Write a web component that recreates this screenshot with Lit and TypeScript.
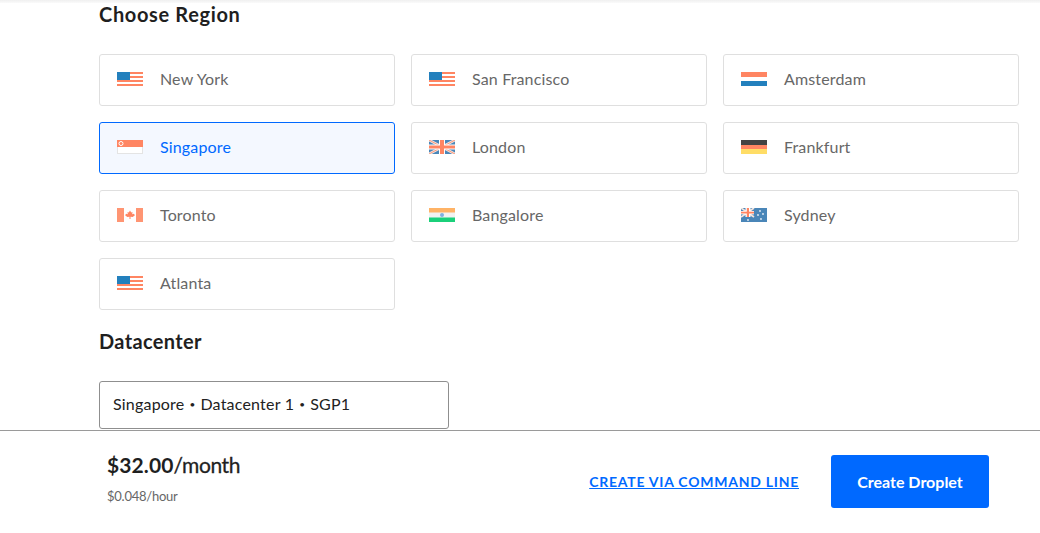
import { LitElement, html, css, svg } from "lit";
import { customElement } from "lit/decorators.js";

const R = (x: number, y: number, w: number, h: number, c: string) =>
  svg`<rect x=${x} y=${y} width=${w} height=${h} fill=${c}></rect>`;
const O = "#ff8562";
const B = "#2380bd";
const W = "#fff";

const us = svg`${R(0,0,26,14,W)}${R(0,0,26,2,O)}${R(0,4,26,2,O)}${R(0,8,26,2,O)}${R(0,12,26,2,O)}${R(0,0,13,8,B)}`;
const jack = svg`${R(0,0,26,14,"#4a86b8")}
  <path d="M0 0L26 14M26 0L0 14" stroke="#f3e4de" stroke-width="2.6"></path>
  <path d="M0 0L26 14M26 0L0 14" stroke=${O} stroke-width="0.8"></path>
  ${R(10,0,6,14,W)}${R(0,4.5,26,5,W)}${R(11,0,4,14,O)}${R(0,5.5,26,3,O)}`;
const flags: Record<string, unknown> = {
  us,
  nl: svg`${R(0,0,26,5,O)}${R(0,5,26,4,W)}${R(0,9,26,5,B)}`,
  sg: svg`${R(0,0,26,14,"#e4e4e4")}${R(1,7,24,6,W)}${R(0,0,26,7,O)}<circle cx="4" cy="3.5" r="2" fill="none" stroke="#fff" stroke-width="1"></circle>`,
  uk: jack,
  de: svg`${R(0,0,26,5,"#434343")}${R(0,5,26,4,O)}${R(0,9,26,5,"#ffdd66")}`,
  ca: svg`${R(0,0,26,14,W)}${R(0,0,7,14,"#ff9573")}${R(19,0,7,14,"#ff9573")}<path d="M13 2.5l1.2 2 1.3-.6-.3 2.400 1.700-.6 1 1.600-2.200 1.800-2.200-.3V11h-1V8.800l-2.200.3-2.200-1.800 1-1.600 1.700.6-.3-2.400 1.300.6z" fill=${O}></path>`,
  in: svg`${R(0,0,26,14,"#f2f2f2")}${R(0,0,26,4.5,"#ffb366")}${R(0,9.5,26,4.5,"#1bd07a")}<circle cx="13" cy="7" r="2" fill="#7fb0e0"></circle>`,
  au: svg`${R(0,0,26,14,"#4a86b8")}
    <path d="M0 0L13 9M13 0L0 9" stroke="#f3e4de" stroke-width="1.8"></path>
    ${R(4.5,0,5,9,W)}${R(0,3,13,3.4,W)}${R(5.8,0,2.2,9,O)}${R(0,3.7,13,1.8,O)}
    ${[[7,12],[19,3],[22,6],[17,7],[20,11]].map(([x,y]) => svg`<circle cx=${x} cy=${y} r="0.9" fill="#e8eef5"></circle>`)}`,
};

const regions = [
  ["New York", "us"], ["San Francisco", "us"], ["Amsterdam", "nl"],
  ["Singapore", "sg"], ["London", "uk"], ["Frankfurt", "de"],
  ["Toronto", "ca"], ["Bangalore", "in"], ["Sydney", "au"],
  ["Atlanta", "us"],
];

@customElement("app-root")
export class AppRoot extends LitElement {
  static styles = css`
    :host {
      display: flex;
      flex-direction: column;
      height: 533px;
      overflow: hidden;
      background: #fff;
      font-family: "Lato", "Liberation Sans", sans-serif;
      color: #1f1f1f;
    }
    .top { height: 3px; flex: none; background: linear-gradient(#f0f0f0, #fafafa); }
    main { height: 427px; flex: none; overflow: hidden; padding: 0 21px 0 99px; }
    h2 { margin: 0; font-size: 20px; line-height: 24px; font-weight: 700; letter-spacing: 0.35px; }
    .title { margin-top: -1px; letter-spacing: 0.65px; }
    .grid {
      display: grid;
      grid-template-columns: repeat(3, 296px);
      grid-auto-rows: 52px;
      gap: 16px;
      margin-top: 28px;
    }
    .card {
      box-sizing: border-box;
      display: flex;
      align-items: center;
      gap: 17px;
      padding: 0 0 2px 17px;
      border: 1px solid #dfdfdf;
      border-radius: 3px;
      font-size: 16px;
      letter-spacing: 0.15px;
      color: #676767;
    }
    .card span { margin-bottom: 2px; }
    .card.on { background: #f4f8ff; border-color: #0069ff; color: #0069ff; }
    .card svg { width: 26px; height: 14px; flex: none; }
    .dc { margin-top: 19px; }
    .select {
      box-sizing: border-box;
      width: 350px;
      height: 48px;
      margin-top: 28px;
      padding: 0 0 3px 13px;
      display: flex;
      align-items: center;
      gap: 5px;
      border: 1px solid #8f8f8f;
      border-radius: 3px;
      font-size: 16px;
      letter-spacing: 0.2px;
      color: #222;
    }
    .dot { font-size: 10px; }
    footer {
      flex: 1;
      border-top: 1px solid #9a9a9a;
      display: flex;
      align-items: center;
      padding: 0 51px 1px 107px;
    }
    .price { flex: 1; padding-bottom: 8px; }
    .amount { font-size: 21px; line-height: 26px; font-weight: 700; letter-spacing: 0.1px; color: #1f1f1f; }
    .amount span { font-weight: 400; letter-spacing: -0.4px; -webkit-text-stroke: 0.3px #1f1f1f; }
    .hour { margin-top: 10px; font-size: 13px; line-height: 16px; letter-spacing: -0.25px; color: #676767; }
    a {
      font-size: 14px;
      font-weight: 700;
      letter-spacing: 0.75px;
      color: #0069ff;
      text-decoration: underline;
      margin-right: 32px;
    }
    button {
      width: 158px;
      height: 53px;
      border: 0;
      border-radius: 3px;
      background: #0069ff;
      color: #fff;
      font: 700 16px "Lato", "Liberation Sans", sans-serif;
    }
  `;

  render() {
    return html`
      <div class="top"></div>
      <main>
        <h2 class="title">Choose Region</h2>
        <div class="grid">
          ${regions.map(([name, flag]) => html`
            <div class="card ${name === "Singapore" ? "on" : ""}">
              <svg viewBox="0 0 26 14">${flags[flag]}</svg>
              <span>${name}</span>
            </div>`)}
        </div>
        <h2 class="dc">Datacenter</h2>
        <div class="select">Singapore <span class="dot">•</span> Datacenter 1 <span class="dot">•</span> SGP1</div>
      </main>
      <footer>
        <div class="price">
          <div class="amount">$32.00<span>/month</span></div>
          <div class="hour">$0.048/hour</div>
        </div>
        <a href="#">CREATE VIA COMMAND LINE</a>
        <button>Create Droplet</button>
      </footer>
    `;
  }
}
